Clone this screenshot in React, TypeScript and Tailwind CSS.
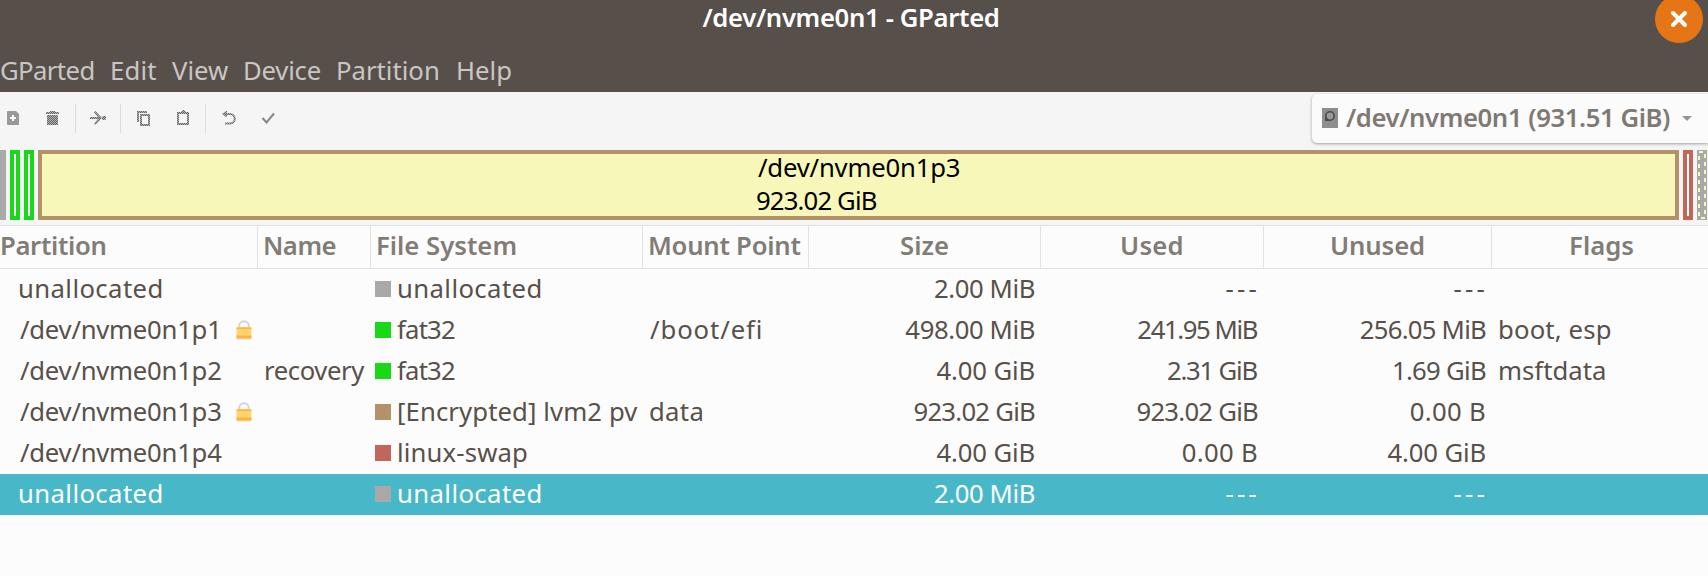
import type { ReactNode } from 'react'
import clsx from 'clsx'

type Label = { text: string; className?: string }

type PartitionRow = {
  partition: Label
  locked?: boolean
  name?: Label
  fsColor: string
  fs: Label
  mount?: Label
  size: Label
  used: Label
  unused: Label
  flags?: Label
  selected?: boolean
}

const UNALLOCATED: Label = { text: 'unallocated', className: 'tracking-[0.4px]' }
const NONE: Label = { text: '---', className: 'tracking-[3.2px] -mr-[2px]' }
const FOUR_GIB: Label = { text: '4.00 GiB', className: 'tracking-[-0.15px]' }
const TWO_MIB: Label = { text: '2.00 MiB', className: 'tracking-[-0.4px]' }
const ZERO_B: Label = { text: '0.00 B', className: 'tracking-[0.3px]' }
const FAT32: Label = { text: 'fat32', className: 'tracking-[-0.8px]' }
const BIG: Label = { text: '923.02 GiB', className: 'tracking-[-0.75px]' }

const device = (text: string): Label => ({ text, className: 'ml-[2px] tracking-[-0.25px]' })

const ROWS: PartitionRow[] = [
  { partition: UNALLOCATED, fsColor: 'bg-[#a9a9a9]', fs: UNALLOCATED, size: TWO_MIB, used: NONE, unused: NONE },
  {
    partition: device('/dev/nvme0n1p1'),
    locked: true,
    fsColor: 'bg-[#18d918]',
    fs: FAT32,
    mount: { text: '/boot/efi', className: 'ml-px tracking-[0.9px]' },
    size: { text: '498.00 MiB', className: 'tracking-[-0.4px]' },
    used: { text: '241.95 MiB', className: 'tracking-[-1.4px] mr-[1px]' },
    unused: { text: '256.05 MiB', className: 'tracking-[-0.75px]' },
    flags: { text: 'boot, esp', className: 'tracking-[0.15px]' },
  },
  {
    partition: device('/dev/nvme0n1p2'),
    name: { text: 'recovery', className: 'tracking-[-0.4px]' },
    fsColor: 'bg-[#18d918]',
    fs: FAT32,
    size: FOUR_GIB,
    used: { text: '2.31 GiB', className: 'tracking-[-1.2px] mr-[1px]' },
    unused: { text: '1.69 GiB', className: 'tracking-[-0.7px]' },
    flags: { text: 'msftdata', className: 'tracking-[0px]' },
  },
  {
    partition: device('/dev/nvme0n1p3'),
    locked: true,
    fsColor: 'bg-[#b39169]',
    fs: { text: '[Encrypted] lvm2 pv', className: 'tracking-[0.1px]' },
    mount: { text: 'data', className: 'tracking-[0.3px]' },
    size: BIG,
    used: BIG,
    unused: ZERO_B,
  },
  {
    partition: device('/dev/nvme0n1p4'),
    fsColor: 'bg-[#c1665a]',
    fs: { text: 'linux-swap', className: 'tracking-[0.15px]' },
    size: FOUR_GIB,
    used: ZERO_B,
    unused: FOUR_GIB,
  },
  {
    partition: UNALLOCATED,
    fsColor: 'bg-[#a9a9a9]',
    fs: UNALLOCATED,
    size: TWO_MIB,
    used: NONE,
    unused: NONE,
    selected: true,
  },
]

const COLUMNS = 'grid grid-cols-[258px_113px_272px_166px_232px_223px_228px_216px]'

const Text = ({ label }: { label?: Label }) =>
  label ? <span className={clsx('whitespace-nowrap', label.className)}>{label.text}</span> : null

const ToolIcon = ({ className, children }: { className?: string; children: ReactNode }) => (
  <svg width="24" height="24" viewBox="0 0 24 24" fill="none" className={clsx('shrink-0', className)}>
    {children}
  </svg>
)

const ToolSeparator = () => <div className="ml-[10px] h-[29px] w-px shrink-0 bg-[#dcdcdc]" />

const Lock = () => (
  <svg width="16" height="20" viewBox="0 0 16 20" fill="none">
    <path d="M3.3 9V5.6a4.7 4.3 0 0 1 9.4 0V9" stroke="#d4d4d4" strokeWidth="2" />
    <rect x="0.6" y="7" width="14.8" height="12" rx="1" fill="#ffd66b" />
    <path d="M.6 7.5h14.8v1.5H.6zM.6 15.5h14.8v3H.6z" fill="#ffb13b" />
    <path d="M1.2 19.2h13.6" stroke="#e4e0d8" />
  </svg>
)

const Toolbar = () => (
  <div className="flex h-[58px] bg-[#f5f5f5]">
    <div className="flex h-[52px] flex-1 items-center">
      {/* Insensitive icons are stippled, so they share one checker pattern. */}
      <ToolIcon className="ml-px">
        <defs>
          <pattern id="stipple" width="2" height="2" patternUnits="userSpaceOnUse">
            <rect width="2" height="2" fill="#b4b4b4" />
            <path d="M0 0h1v1H0zM1 1h1v1H1z" fill="#636363" />
          </pattern>
        </defs>
        <path d="M6 6a1 1 0 0 1 1-1h8l3 3v10a1 1 0 0 1-1 1H7a1 1 0 0 1-1-1z" fill="#999" />
        <path d="M12 9v6M9 12h6" stroke="#f8f8f8" strokeWidth="2" />
      </ToolIcon>
      <ToolIcon className="ml-[16px]">
        <path d="M9 5h5v1h4v2H5V6h4zM6 9h11v10H6z" fill="url(#stipple)" />
      </ToolIcon>
      <ToolSeparator />
      <ToolIcon className="ml-[10px]">
        <path
          d="M4 11h8L8 6.5 9.5 5 16 12l-6.5 7L8 17.5l4-4.5H4zM16 11l1-1h2l1 1v2l-1 1h-2l-1-1z"
          fill="url(#stipple)"
        />
      </ToolIcon>
      <ToolSeparator />
      <ToolIcon className="ml-[11px]">
        <path d="M5 5h10v2H7v9H5zM8 8h10v12H8zM10 10v8h6v-8z" fillRule="evenodd" fill="url(#stipple)" />
      </ToolIcon>
      <ToolIcon className="ml-[15px]">
        <path d="M6 6h4l2-2h1l2 2h3v13H6zM8 8v9h8V8z" fillRule="evenodd" fill="url(#stipple)" />
      </ToolIcon>
      <ToolSeparator />
      <ToolIcon className="ml-[11px]">
        <path
          d="M5 8l4-3h1v2h3a5.5 5.5 0 0 1 0 11.5H8v-2h5a3.7 3.7 0 0 0 0-7.5h-3v2H9z"
          fill="url(#stipple)"
        />
      </ToolIcon>
      <ToolIcon className="ml-[15px]">
        <path d="M6.5 12l4 4.5L18 7.5" stroke="#858585" strokeWidth="2" />
      </ToolIcon>
    </div>

    <div className="mt-[2px] flex h-[49px] w-[396px] rounded-l-[5px] bg-[#fbfbfb] pl-[10px] shadow-[0_1px_3px_rgba(0,0,0,0.35)]">
      <svg width="16" height="20" viewBox="0 0 16 20" className="mt-[14px] shrink-0">
        <rect width="16" height="20" fill="#8e8e8e" />
        <circle cx="8" cy="8" r="4.2" fill="#9a9a9a" stroke="#4a4a4a" strokeWidth="1.6" />
        <path d="M3 8v5h5z" fill="#4a4a4a" />
      </svg>
      <span className="ml-[8px] w-[336px] whitespace-nowrap font-semibold leading-[48px] tracking-[-0.42px] text-[#7f7974]">
        /dev/nvme0n1 (931.51 GiB)
      </span>
      <svg width="10" height="5" viewBox="0 0 10 5" className="mt-[22px] shrink-0">
        <path d="M0 0h10L5 5z" fill="#999593" />
      </svg>
    </div>
  </div>
)

const DASHES = [0, 1, 2, 3, 4, 5, 6, 7]

const DiskMap = () => (
  <div className="flex h-[75px] gap-[4px] bg-[#f5f5f5] pr-px pb-[5px]">
    <div className="w-[6px] bg-[#a9a9a9]" />
    <div className="w-[10px] border-4 border-[#18d918] bg-white" />
    <div className="w-[10px] border-4 border-[#18d918] bg-white" />
    <div className="flex flex-1 items-center justify-center border-4 border-[#b39169] bg-[#f8f7ba]">
      <div className="mb-[3px] w-[203px] whitespace-nowrap leading-[33px] text-black">
        <div className="ml-px tracking-[-0.2px]">/dev/nvme0n1p3</div>
        <div className="-ml-px tracking-[-0.85px]">923.02 GiB</div>
      </div>
    </div>
    <div className="w-[10px] border-4 border-[#c1665a] bg-white" />
    {/* Selected unallocated space with its dashed focus outline. */}
    <svg width="10" height="70" viewBox="0 0 10 70" className="shrink-0 bg-[#a9a9a9]" fill="#f8f7ba">
      <rect x="2" y="1" width="4" height="2" />
      <rect x="4" y="67" width="4" height="2" />
      {DASHES.map((n) => (
        <g key={n}>
          <rect x="1" y={6 + n * 8} width="2" height="4" />
          <rect x="7" y={4 + n * 8} width="2" height="4" />
        </g>
      ))}
    </svg>
  </div>
)

const HeaderCell = ({ className, children }: { className?: string; children: ReactNode }) => (
  <div className={clsx('whitespace-nowrap border-r border-[#e2e2e2]', className)}>{children}</div>
)

const PartitionTable = () => (
  <div className="flex-1 bg-[#fcfcfc] text-[#58504a]">
    <div
      className={clsx(
        COLUMNS,
        'h-[44px] border-y border-[#e0e0e0] font-semibold leading-[40px] text-[#827c77]',
      )}
    >
      <HeaderCell className="tracking-[-0.35px]">Partition</HeaderCell>
      <HeaderCell className="pl-[5px] tracking-[-0.5px]">Name</HeaderCell>
      <HeaderCell className="pl-[5px]">File System</HeaderCell>
      <HeaderCell className="pl-[5px] tracking-[-0.25px]">Mount Point</HeaderCell>
      <HeaderCell className="text-center">Size</HeaderCell>
      <HeaderCell className="text-center tracking-[0.2px]">Used</HeaderCell>
      <HeaderCell className="text-center tracking-[-0.1px]">Unused</HeaderCell>
      <div className="pl-[3px] text-center">Flags</div>
    </div>
    {ROWS.map((row, i) => (
      <div
        key={i}
        className={clsx(COLUMNS, 'h-[41px] leading-[40px]', row.selected && 'bg-[#48b8c8] text-white')}
      >
        <div className="flex pr-[6px] pl-[18px]">
          <Text label={row.partition} />
          {row.locked && (
            <span className="mt-[10px] ml-auto">
              <Lock />
            </span>
          )}
        </div>
        <div className="pl-[6px]">
          <Text label={row.name} />
        </div>
        <div className="flex pl-[4px]">
          <span className={clsx('mt-[12px] h-[16px] w-[16px] shrink-0', row.fsColor)} />
          <span className="ml-[6px] flex">
            <Text label={row.fs} />
          </span>
        </div>
        <div className="pl-[6px]">
          <Text label={row.mount} />
        </div>
        <div className="pr-[6px] text-right">
          <Text label={row.size} />
        </div>
        <div className="pr-[6px] text-right">
          <Text label={row.used} />
        </div>
        <div className="pr-[6px] text-right">
          <Text label={row.unused} />
        </div>
        <div className="pl-[6px]">
          <Text label={row.flags} />
        </div>
      </div>
    ))}
  </div>
)

export default function App() {
  return (
    <div className="flex h-[576px] w-[1708px] flex-col overflow-hidden bg-[#fcfcfc] font-['Noto_Sans',sans-serif] text-[25.7px]">
      <header className="relative h-[92px] bg-[#574f4a]">
        <h1 className="pr-[6px] text-center font-semibold leading-[36px] tracking-[-0.35px] text-white">
          /dev/nvme0n1 - GParted
        </h1>
        <button
          aria-label="Close"
          className="absolute -top-[5px] right-[5px] flex h-[48px] w-[48px] items-center justify-center rounded-full bg-[#e67515]"
        >
          <svg width="16" height="16" viewBox="0 0 16 16">
            <path d="M2 2l12 12M14 2L2 14" stroke="white" strokeWidth="4" strokeLinecap="round" />
          </svg>
        </button>
        <nav className="mt-[18px] flex leading-[34px] text-[#c9c6c3]">
          <span className="w-[110px] tracking-[-0.6px]">GParted</span>
          <span className="w-[62px] tracking-[0.2px]">Edit</span>
          <span className="w-[71px]">View</span>
          <span className="w-[93px] tracking-[-0.2px]">Device</span>
          <span className="w-[120px]">Partition</span>
          <span>Help</span>
        </nav>
      </header>
      <Toolbar />
      <DiskMap />
      <PartitionTable />
    </div>
  )
}
